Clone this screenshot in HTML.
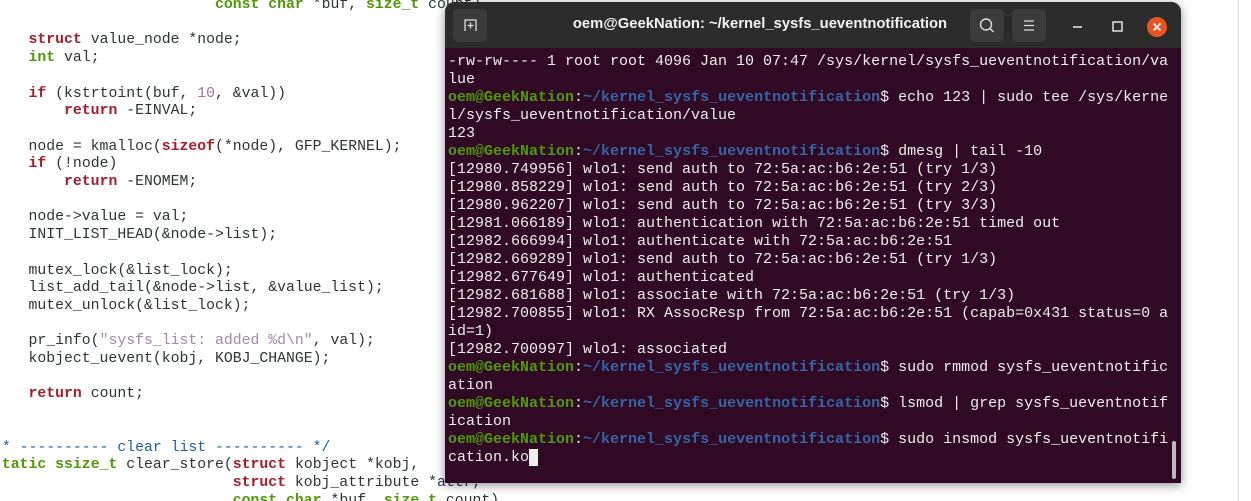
<!DOCTYPE html>
<html><head><meta charset="utf-8"><style>
html,body{margin:0;padding:0;width:1251px;height:501px;overflow:hidden;background:#fff;position:relative}
pre{margin:0;font-family:"Liberation Mono",monospace}
#ed{position:absolute;left:-7px;top:-3px;font-size:14.8px;line-height:17.7px;color:#2e3436}
.k{color:#a51d2d;font-weight:bold}.t{color:#4e9a06;font-weight:bold}.n{color:#a06fa0}.s{color:#a08aa8}.c{color:#1a5fb4}
#sb{position:absolute;left:1238px;top:0;width:1px;height:501px;background:#ddd}
#term{position:absolute;left:445px;top:2px;width:736px;height:481px;background:#300a24;border-radius:10px 10px 0 0;box-shadow:0 2px 10px rgba(0,0,0,.45);overflow:hidden}
#tb{position:absolute;left:0;top:0;width:736px;height:46px;background:#2c2c2c}
#title{position:absolute;left:0;width:630px;top:14px;text-align:center;color:#f2f2f2;font:bold 14.8px "Liberation Sans",sans-serif;white-space:nowrap}
.bt{position:absolute;top:7px;width:34px;height:33px;background:#3b3b3b;border-radius:5px}
#tx{position:absolute;left:3px;top:51px;font-size:15px;line-height:18px;color:#eeeeec}
.g{color:#4e9a06;font-weight:bold}.b{color:#3465a4;font-weight:bold}
.cur{background:#eeeeec;color:#300a24}
</style></head><body>
<pre id="ed">                         <span class="t">const</span> <span class="t">char</span> *buf, <span class="t">size_t</span> count)

    <span class="k">struct</span> value_node *node;
    <span class="t">int</span> val;

    <span class="k">if</span> (kstrtoint(buf, <span class="n">10</span>, &amp;val))
        <span class="k">return</span> -EINVAL;

    node = kmalloc(<span class="k">sizeof</span>(*node), GFP_KERNEL);
    <span class="k">if</span> (!node)
        <span class="k">return</span> -ENOMEM;

    node-&gt;value = val;
    INIT_LIST_HEAD(&amp;node-&gt;list);

    mutex_lock(&amp;list_lock);
    list_add_tail(&amp;node-&gt;list, &amp;value_list);
    mutex_unlock(&amp;list_lock);

    pr_info(<span class="s">"sysfs_list: added %d\n"</span>, val);
    kobject_uevent(kobj, KOBJ_CHANGE);

    <span class="k">return</span> count;


<span class="c"> * ---------- clear list ---------- */</span>
<span class="t"> tatic</span> <span class="t">ssize_t</span> clear_store(<span class="k">struct</span> kobject *kobj,
                           <span class="k">struct</span> kobj_attribute *attr,
                           <span class="t">const</span> <span class="t">char</span> *buf, <span class="t">size_t</span> count)</pre>
<div id="sb"></div>
<div id="term">
<div id="tb">
<div class="bt" style="left:8px"><svg width="34" height="33"><path d="M12 22V11h11v11" fill="none" stroke="#ddd" stroke-width="1.3"/><path d="M17.5 13.5v6M14.5 16.5h6" stroke="#ddd" stroke-width="1.3"/></svg></div>
<div id="title">oem@GeekNation: ~/kernel_sysfs_ueventnotification</div>
<div class="bt" style="left:525px"><svg width="34" height="33"><circle cx="16" cy="15.5" r="5.5" fill="none" stroke="#ddd" stroke-width="1.4"/><path d="M20 19.5l3.5 3.5" stroke="#ddd" stroke-width="1.4"/></svg></div>
<div class="bt" style="left:567px"><svg width="34" height="33"><path d="M12 12h10M12 16.5h10M12 21h10" stroke="#ddd" stroke-width="1.3"/></svg></div>
<svg style="position:absolute;left:620px;top:0" width="116" height="46"><path d="M8 25h9" stroke="#eee" stroke-width="1.5"/><rect x="48" y="20" width="9" height="9" fill="none" stroke="#eee" stroke-width="1.4"/><circle cx="92" cy="25" r="10" fill="#e95420"/><path d="M88.5 21.5l7 7M95.5 21.5l-7 7" stroke="#fff" stroke-width="1.6"/></svg>
</div>
<pre id="tx">-rw-rw---- 1 root root 4096 Jan 10 07:47 /sys/kernel/sysfs_ueventnotification/va
lue
<span class="g">oem@GeekNation</span>:<span class="b">~/kernel_sysfs_ueventnotification</span>$ echo 123 | sudo tee /sys/kerne
l/sysfs_ueventnotification/value
123
<span class="g">oem@GeekNation</span>:<span class="b">~/kernel_sysfs_ueventnotification</span>$ dmesg | tail -10
[12980.749956] wlo1: send auth to 72:5a:ac:b6:2e:51 (try 1/3)
[12980.858229] wlo1: send auth to 72:5a:ac:b6:2e:51 (try 2/3)
[12980.962207] wlo1: send auth to 72:5a:ac:b6:2e:51 (try 3/3)
[12981.066189] wlo1: authentication with 72:5a:ac:b6:2e:51 timed out
[12982.666994] wlo1: authenticate with 72:5a:ac:b6:2e:51
[12982.669289] wlo1: send auth to 72:5a:ac:b6:2e:51 (try 1/3)
[12982.677649] wlo1: authenticated
[12982.681688] wlo1: associate with 72:5a:ac:b6:2e:51 (try 1/3)
[12982.700855] wlo1: RX AssocResp from 72:5a:ac:b6:2e:51 (capab=0x431 status=0 a
id=1)
[12982.700997] wlo1: associated
<span class="g">oem@GeekNation</span>:<span class="b">~/kernel_sysfs_ueventnotification</span>$ sudo rmmod sysfs_ueventnotific
ation
<span class="g">oem@GeekNation</span>:<span class="b">~/kernel_sysfs_ueventnotification</span>$ lsmod | grep sysfs_ueventnotif
ication
<span class="g">oem@GeekNation</span>:<span class="b">~/kernel_sysfs_ueventnotification</span>$ sudo insmod sysfs_ueventnotifi
cation.ko<span class="cur"> </span></pre>
<div style="position:absolute;left:727px;top:439px;width:4px;height:38px;background:#bbb;border-radius:2px"></div>
</div>
</body></html>
